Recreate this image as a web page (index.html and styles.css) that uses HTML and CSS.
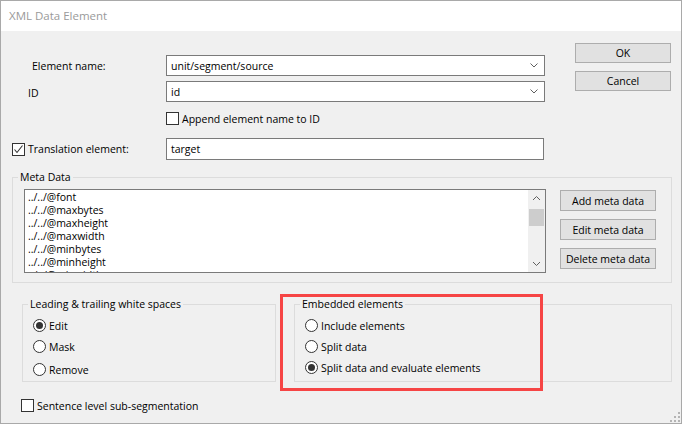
FILE: index.html
```html
<!DOCTYPE html>
<html lang="en">
<head>
    <meta charset="UTF-8">
    <title>XML Data Element</title>
    <link rel="stylesheet" href="styles.css">
</head>
<body>
<div class="window">
    <div class="titlebar">XML Data Element</div>

    <div class="client">
        <div class="top">
            <div class="form">
                <div class="row row-name">
                    <label class="field-label">Element name:</label>
                    <div class="combo">
                        <span>unit/segment/source</span>
                        <svg class="chevron" width="8" height="5" viewBox="0 0 8 5"><polyline points="0.5,0.5 4,4 7.5,0.5"/></svg>
                    </div>
                </div>
                <div class="row row-id">
                    <label class="field-label label-id">ID</label>
                    <div class="combo">
                        <span>id</span>
                        <svg class="chevron" width="8" height="5" viewBox="0 0 8 5"><polyline points="0.5,0.5 4,4 7.5,0.5"/></svg>
                    </div>
                </div>
                <div class="row row-append">
                    <span></span>
                    <label class="check"><span class="box"></span>Append element name to ID</label>
                </div>
                <div class="row row-target">
                    <label class="check">
                        <span class="box">
                            <svg width="11" height="11" viewBox="0 0 11 11"><polyline points="1.5,5.5 4,8.5 9.5,1.5"/></svg>
                        </span>Translation element:
                    </label>
                    <div class="textbox">target</div>
                </div>
            </div>
            <div class="actions">
                <button class="btn">OK</button>
                <button class="btn">Cancel</button>
            </div>
        </div>

        <fieldset class="group meta">
            <legend>Meta Data</legend>
            <div class="meta-body">
                <div class="listbox">
                    <ul class="items">
                        <li>../../@font</li>
                        <li>../../@maxbytes</li>
                        <li>../../@maxheight</li>
                        <li>../../@maxwidth</li>
                        <li>../../@minbytes</li>
                        <li>../../@minheight</li>
                        <li>../../@minwidth</li>
                    </ul>
                    <div class="scrollbar">
                        <svg class="arrow" width="17" height="17" viewBox="0 0 17 17"><polyline points="5,10 8.5,6.5 12,10"/></svg>
                        <div class="track"><div class="thumb"></div></div>
                        <svg class="arrow" width="17" height="17" viewBox="0 0 17 17"><polyline points="5,7 8.5,10.5 12,7"/></svg>
                    </div>
                </div>
                <div class="meta-actions">
                    <button class="btn">Add meta data</button>
                    <button class="btn">Edit meta data</button>
                    <button class="btn">Delete meta data</button>
                </div>
            </div>
        </fieldset>

        <div class="options">
            <fieldset class="group spaces">
                <legend>Leading &amp; trailing white spaces</legend>
                <div class="radios">
                    <label class="radio"><span class="dot on"></span>Edit</label>
                    <label class="radio"><span class="dot"></span>Mask</label>
                    <label class="radio radio-last"><span class="dot"></span>Remove</label>
                </div>
            </fieldset>
            <fieldset class="group embedded">
                <legend>Embedded elements</legend>
                <div class="radios">
                    <label class="radio"><span class="dot"></span>Include elements</label>
                    <label class="radio"><span class="dot"></span>Split data</label>
                    <label class="radio"><span class="dot on"></span>Split data and evaluate elements</label>
                </div>
            </fieldset>
        </div>

        <label class="check sentence"><span class="box"></span>Sentence level sub-segmentation</label>
    </div>

    <!-- annotation drawn over the dialog -->
    <div class="highlight"></div>

    <svg class="grip" width="10" height="10" viewBox="0 0 10 10">
        <rect x="8" y="0" width="2" height="2"/>
        <rect x="4" y="4" width="2" height="2"/>
        <rect x="8" y="4" width="2" height="2"/>
        <rect x="0" y="8" width="2" height="2"/>
        <rect x="4" y="8" width="2" height="2"/>
        <rect x="8" y="8" width="2" height="2"/>
    </svg>
</div>
</body>
</html>
```

FILE: styles.css
```css
body {
    margin: 0;
    background: #ffffff;
    font-family: "Open Sans", "Noto Sans", sans-serif;
    font-size: 10.5px;
    line-height: 14px;
    color: #000;
}

.window {
    position: relative;
    width: 682px;
    height: 424px;
    box-sizing: border-box;
    border: 1px solid #a9a9a9;
    background: #f0f0f0;
}

.titlebar {
    height: 30px;
    line-height: 29px;
    padding-left: 8px;
    background: #fff;
    color: #9a9a9a;
    font-size: 11.5px;
}

.client {
    padding-left: 11px;
}

/* top part: fields and OK / Cancel */
.top {
    display: flex;
}

.form {
    width: 533px;
    padding-top: 24px;
}

.row {
    display: grid;
    grid-template-columns: 154px 1fr;
    align-items: center;
}

.row-name { height: 21px; }
.row-id { height: 21px; margin-top: 5px; }
.row-append { height: 13px; margin-top: 10px; }
.row-target { height: 22px; margin-top: 13px; }

.field-label {
    padding-left: 20px;
}

.label-id {
    padding-left: 16px;
    padding-top: 3px;
}

.combo,
.textbox {
    height: 100%;
    box-sizing: border-box;
    border: 1px solid #7a7a7a;
    background: #fff;
    display: flex;
    align-items: center;
    padding: 0 4px;
}

.combo span {
    flex: 1;
}

.textbox {
    margin-right: 1px;
}

.chevron {
    margin-right: 2px;
}

.chevron polyline,
.arrow polyline {
    fill: none;
    stroke: #606060;
    stroke-width: 1;
}

.actions {
    margin-left: 30px;
    padding-top: 12px;
    display: flex;
    flex-direction: column;
    gap: 8px;
}

.btn {
    width: 96px;
    height: 20px;
    box-sizing: border-box;
    border: 1px solid #adadad;
    background: #e1e1e1;
    font-family: inherit;
    font-size: inherit;
    color: #000;
    padding: 0;
    white-space: nowrap;
}

/* check boxes and radios */
.check,
.radio {
    display: flex;
    align-items: center;
    gap: 3px;
    height: 13px;
}

.box {
    width: 13px;
    height: 13px;
    box-sizing: border-box;
    border: 1px solid #333;
    background: #fff;
    display: flex;
    align-items: center;
    justify-content: center;
}

.box polyline {
    fill: none;
    stroke: #333;
    stroke-width: 1.1;
}

.dot {
    width: 13px;
    height: 13px;
    box-sizing: border-box;
    border: 1px solid #333;
    border-radius: 50%;
    background: #fff;
    display: flex;
    align-items: center;
    justify-content: center;
}

.dot.on::after {
    content: "";
    width: 7px;
    height: 7px;
    border-radius: 50%;
    background: #333;
}

/* group boxes */
.group {
    margin: 0;
    padding: 0;
    border: 1px solid #dcdcdc;
    box-sizing: border-box;
}

.group legend {
    margin-left: 5px;
    padding: 0 2px;
    line-height: 14px;
}

.meta {
    width: 660px;
    margin-top: 10px;
}

.meta-body {
    display: flex;
    padding: 5px 0 9px 11px;
}

.listbox {
    width: 522px;
    height: 84px;
    box-sizing: border-box;
    border: 1px solid #7a7a7a;
    background: #fff;
    display: flex;
}

.items {
    flex: 1;
    list-style: none;
    margin: 0;
    padding: 1px 0 0 3px;
    line-height: 13px;
    overflow: hidden;
}

.scrollbar {
    width: 17px;
    background: #f0f0f0;
    display: flex;
    flex-direction: column;
}

.track {
    flex: 1;
}

.thumb {
    height: 17px;
    margin: 2px 1px 0;
    background: #cdcdcd;
}

.meta-actions {
    margin-left: 14px;
    margin-top: 1px;
    display: flex;
    flex-direction: column;
    gap: 8px;
}

.meta-actions .btn {
    height: 21px;
}

.options {
    display: flex;
    gap: 18px;
    margin-top: 14px;
    margin-left: 10px;
}

.spaces,
.embedded {
    height: 85px;
}

.spaces { width: 254px; }
.embedded { width: 378px; }

.radios {
    display: flex;
    flex-direction: column;
    gap: 8px;
    padding: 8px 0 0 10px;
}

.radio-last {
    margin-top: 2px;
}

.sentence {
    margin-top: 17px;
    margin-left: 9px;
}

.highlight {
    position: absolute;
    left: 279px;
    top: 293px;
    width: 263px;
    height: 97px;
    box-sizing: border-box;
    border: 3px solid #f64545;
}

.grip {
    position: absolute;
    right: 1px;
    bottom: 1px;
    fill: #b4b4b4;
}
```
